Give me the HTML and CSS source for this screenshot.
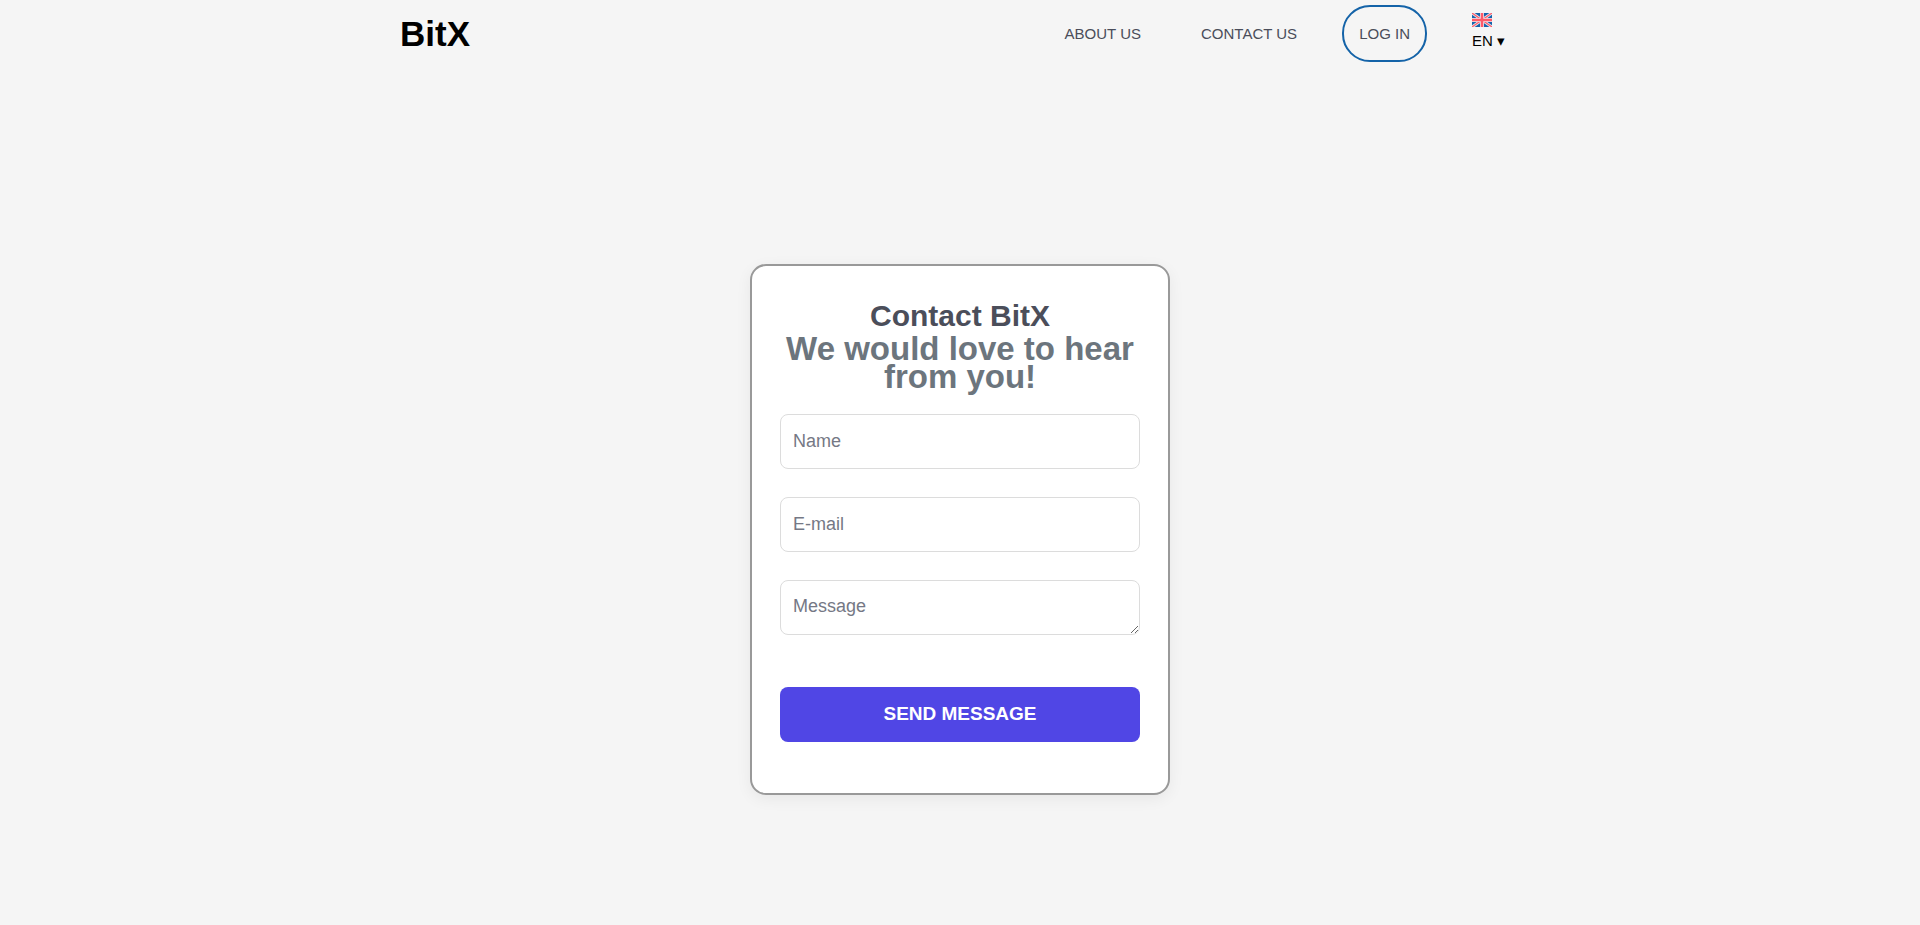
FILE: index.html
```html
<!DOCTYPE html>
<html lang="en">
<head>
<meta charset="utf-8">
<title>Contact BitX</title>
<link rel="stylesheet" href="styles.css">
</head>
<body>
<header class="header">
  <a class="logo" href="#">BitX</a>
  <nav class="nav">
    <a class="nav-link" href="#">ABOUT US</a>
    <a class="nav-link" href="#">CONTACT US</a>
    <a class="login" href="#">LOG IN</a>
    <button class="language" type="button">
      <svg class="flag" viewBox="0 0 20 14" aria-hidden="true">
        <rect width="20" height="14" fill="#1463ac"/>
        <path d="M0 0L20 14M20 0L0 14" stroke="#e4e4ea" stroke-width="3"/>
        <path d="M0 0L20 14M20 0L0 14" stroke="#ff5a68" stroke-width="1.2"/>
        <path d="M10 0V14M0 7H20" stroke="#e8e8ee" stroke-width="4"/>
        <path d="M10 0V14M0 7H20" stroke="#ff5a68" stroke-width="2.5"/>
      </svg>
      <span>EN ▾</span>
    </button>
  </nav>
</header>
<main class="main">
  <form class="card">
    <h1 class="title">Contact BitX</h1>
    <h2 class="subtitle">We would love to hear from you!</h2>
    <div class="fields">
      <input class="field" type="text" placeholder="Name" aria-label="Name">
      <input class="field" type="email" placeholder="E-mail" aria-label="E-mail">
      <textarea class="field" placeholder="Message" aria-label="Message"></textarea>
    </div>
    <button class="send" type="submit">SEND MESSAGE</button>
  </form>
</main>
</body>
</html>
```

FILE: styles.css
```css
* {
  box-sizing: border-box;
}

body {
  margin: 0;
  min-height: 100vh;
  display: flex;
  flex-direction: column;
  background: #f5f5f5;
  color: #000;
  font-family: "Liberation Sans", Arial, sans-serif;
}

.header {
  width: 100%;
  max-width: 1120px;
  margin: 0 auto;
  padding: 5px 15px 5px 0;
  display: flex;
  align-items: center;
  justify-content: space-between;
}

.logo {
  color: #000;
  font-size: 35px;
  font-weight: bold;
  text-decoration: none;
}

.nav {
  display: flex;
  align-items: center;
  gap: 45px;
  font-size: 15px;
}

.nav-link,
.login {
  color: #4a4d5a;
  line-height: 53px;
  text-decoration: none;
}

.nav-link:first-child {
  margin-right: 15px;
}

.login {
  padding: 0 15px;
  border: 2px solid #1463a8;
  border-radius: 28px;
}

.language {
  display: flex;
  flex-direction: column;
  align-items: flex-start;
  gap: 5px;
  padding: 0 0 4px;
  border: 0;
  background: none;
  color: #000;
  font: inherit;
}

.flag {
  width: 20px;
  height: 14px;
}

.main {
  flex: 1;
  display: flex;
  align-items: center;
  justify-content: center;
  padding: 132px 16px 66px;
}

.card {
  width: 100%;
  max-width: 420px;
  padding: 36px 28px 51px;
  border: 2px solid #999;
  border-radius: 16px;
  background: #fff;
  box-shadow: 0 4px 16px rgba(0, 0, 0, 0.06);
}

.title,
.subtitle {
  margin: 0;
  line-height: 28px;
  text-align: center;
}

.title {
  color: #4b4e5a;
  font-size: 30px;
}

.subtitle {
  margin-top: 5px;
  color: #6c757d;
  font-size: 33px;
}

.fields {
  display: flex;
  flex-direction: column;
  gap: 28px;
  margin: 23px 0 52px;
}

.field {
  display: block;
  width: 100%;
  height: 55px;
  padding: 12px;
  border: 1px solid #dcdcdc;
  border-radius: 8px;
  background: #fff;
  color: #4b4e5a;
  font: 18px/26px "Liberation Sans", Arial, sans-serif;
}

.field::placeholder {
  color: #757885;
}

.send {
  display: block;
  width: 100%;
  height: 55px;
  border: 0;
  border-radius: 8px;
  background: #5046e5;
  color: #fff;
  font: bold 19px "Liberation Sans", Arial, sans-serif;
}
```
